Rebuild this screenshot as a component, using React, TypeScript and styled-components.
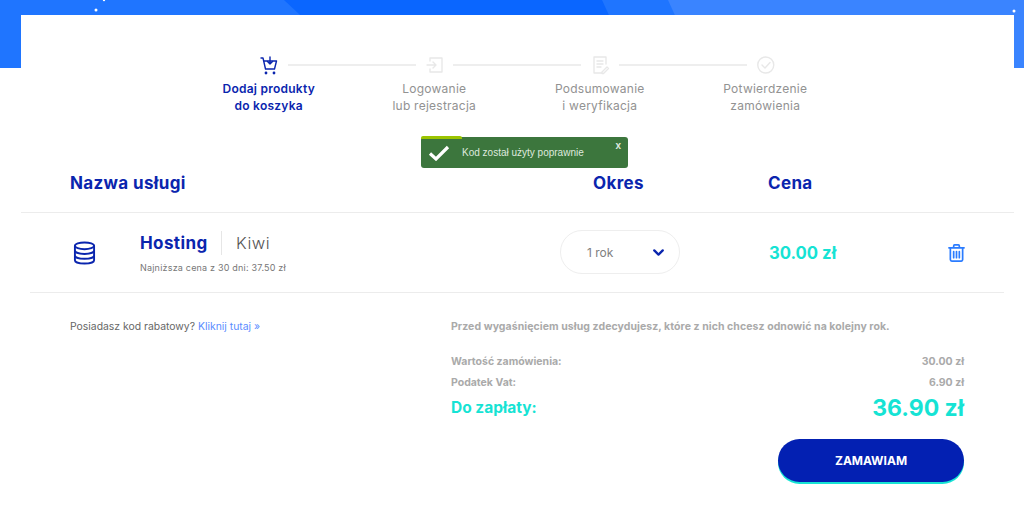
import React from "react";
import styled, { createGlobalStyle } from "styled-components";
import { ChevronDown } from "lucide-react";

const Global = createGlobalStyle`
  html, body { margin: 0; padding: 0; background: #fff; overflow: hidden; }
  body { font-family: Inter, "Open Sans", sans-serif; }
  * { box-sizing: border-box; }
`;

const navy = "#0a25ae";
const cyan = "#16e3d4";

const Page = styled.div`
  width: 1024px;
  height: 511px;
  overflow: hidden;
`;

const Hero = styled.header`
  position: relative;
  height: 68px;
  margin-bottom: -53px;
  background: #1f75ff;
  overflow: hidden;
`;

const HeroArt = styled.svg`
  position: absolute;
  inset: 0;
  width: 1024px;
  height: 68px;
`;

const Card = styled.main`
  position: relative;
  width: 993px;
  height: 496px;
  margin-left: 21px;
  background: #fff;
  padding-top: 40px;
`;

const Track = styled.div`
  display: flex;
  align-items: center;
  justify-content: center;
  height: 20px;
  margin-left: -1px;
`;

const StepIcon = styled.svg<{ $active?: boolean }>`
  width: 37.5px;
  height: 20px;
  flex: none;
  fill: none;
  stroke: ${(p) => (p.$active ? navy : "#e8e8e8")};
  stroke-width: 1.4;
  stroke-linecap: round;
  stroke-linejoin: round;
`;

const Connector = styled.span`
  width: 128px;
  height: 2px;
  background: #eeeeee;
  flex: none;
`;

const Labels = styled.div`
  display: grid;
  grid-template-columns: repeat(4, 165.5px);
  justify-content: center;
  margin: 5px 0 0 -1px;
`;

const Label = styled.div<{ $active?: boolean }>`
  text-align: center;
  font-size: 12px;
  line-height: 17px;
  letter-spacing: 0.25px;
  color: ${(p) => (p.$active ? navy : "#929292")};
  font-weight: ${(p) => (p.$active ? 600 : 400)};
`;

const Toast = styled.div`
  position: absolute;
  left: 400px;
  top: 122px;
  width: 207px;
  height: 31px;
  display: flex;
  align-items: center;
  padding-left: 7px;
  background: #3c763d;
  border-radius: 3px;
  color: #dfe9df;
  font: 400 10px "Liberation Sans", Arial, sans-serif;
`;

const ToastBar = styled.span`
  position: absolute;
  left: 0;
  top: -1.5px;
  width: 41px;
  height: 3.5px;
  background: #9bc400;
  border-radius: 2px 2px 0 0;
`;

const ToastCheck = styled.svg`
  width: 22px;
  height: 16px;
  margin-right: 12px;
  fill: none;
  stroke: #fff;
  stroke-width: 3.2;
`;

const ToastClose = styled.span`
  position: absolute;
  right: 7px;
  top: 3px;
  font-size: 10px;
  font-weight: 700;
`;

const Columns = styled.div`
  display: grid;
  grid-template-columns: 491px 175px 1fr;
  align-items: center;
  height: 58px;
  margin-top: 40px;
  padding-left: 49px;
  color: ${navy};
  font-size: 17px;
  font-weight: 700;
  letter-spacing: 0.35px;
`;

const ColHeadOkres = styled.div`
  padding-left: 32px;
`;

const ColHeadCena = styled.div`
  padding-left: 32px;
`;

const Rule = styled.hr<{ $inset?: boolean }>`
  height: 1px;
  margin: 0 ${(p) => (p.$inset ? "10px 0 9px" : "0")};
  border: 0;
  background: #ececec;
`;

const Row = styled.section`
  display: flex;
  align-items: center;
  height: 79px;
  padding-left: 52px;
`;

const DbIcon = styled.svg`
  width: 23px;
  height: 24px;
  flex: none;
  fill: none;
  stroke: ${navy};
  stroke-width: 2;
`;

const Product = styled.div`
  width: 420px;
  margin-left: 44px;
  margin-top: -2px;
`;

const ProductHead = styled.div`
  display: flex;
  align-items: center;
  height: 24px;
`;

const ProductName = styled.span`
  width: 82px;
  height: 24px;
  line-height: 24px;
  border-right: 1px solid #e6e6e6;
  color: ${navy};
  font-size: 17px;
  font-weight: 700;
  letter-spacing: 0.4px;
`;

const ProductPlan = styled.span`
  margin-left: 14px;
  color: #555;
  font-size: 16.5px;
  font-weight: 300;
  letter-spacing: 0.5px;
`;

const ProductNote = styled.div`
  margin-top: 7px;
  color: #777;
  font-size: 9px;
  letter-spacing: 0.2px;
`;

const PeriodSelect = styled.div`
  display: flex;
  align-items: center;
  justify-content: space-between;
  width: 120px;
  height: 44px;
  margin-top: -1px;
  padding: 0 12px 0 26px;
  border: 1px solid #eeeeee;
  border-radius: 22px;
  color: #808080;
  font-size: 12px;
`;

const Chevron = styled(ChevronDown)`
  width: 17px;
  height: 17px;
  color: ${navy};
  stroke-width: 3.2;
`;

const Price = styled.div`
  width: 68px;
  margin-left: 89px;
  color: ${cyan};
  font-size: 16.7px;
  font-weight: 700;
  white-space: nowrap;
`;

const TrashIcon = styled.svg`
  width: 17px;
  height: 18px;
  margin-left: 111px;
  fill: none;
  stroke: #2b7cff;
  stroke-width: 1.8;
  stroke-linecap: round;
  stroke-linejoin: round;
`;

const Lower = styled.section`
  display: flex;
  padding: 27px 50px 0 49px;
`;

const Promo = styled.div`
  width: 381px;
  font-size: 10.4px;
  line-height: 14px;
  color: #666;
`;

const PromoLink = styled.a`
  color: #5b8cff;
`;

const Summary = styled.div`
  flex: 1;
  color: #aaaaaa;
  font-size: 10.5px;
  font-weight: 700;
`;

const Notice = styled.p`
  margin: 0 0 17px;
  line-height: 14px;
  letter-spacing: 0.07px;
  white-space: nowrap;
`;

const SumRow = styled.div`
  display: flex;
  justify-content: space-between;
  align-items: center;
  height: 21px;
`;

const TotalRow = styled.div`
  display: flex;
  justify-content: space-between;
  align-items: center;
  height: 30px;
  margin-top: -1px;
  color: ${cyan};
  font-size: 15.5px;
`;

const TotalValue = styled.span`
  margin-top: 2px;
  font-size: 23px;
`;

const Actions = styled.div`
  display: flex;
  justify-content: flex-end;
  margin-top: 17px;
`;

const OrderButton = styled.button`
  width: 186px;
  height: 43px;
  border: 0;
  border-radius: 22px;
  background: #0320b2;
  box-shadow: 0 2px 0 ${cyan};
  color: #fff;
  font: 700 12px Inter, sans-serif;
`;

export default function App() {
  return (
    <Page>
      <Global />
      <Hero>
        <HeroArt viewBox="0 0 1024 68">
          <path d="M284 0 L357 68 L633 68 L602 0 Z" fill="#0a66ff" />
          <path d="M668 0 L699 68 L1024 68 L1024 0 Z" fill="#3a84ff" />
          <circle cx="96" cy="10" r="1.500" fill="#fff" />
          <circle cx="104" cy="0" r="1.200" fill="#fff" />
          <circle cx="1014" cy="11" r="1.500" fill="#fff" />
        </HeroArt>
      </Hero>
      <Card>
        <Track>
          <StepIcon $active viewBox="0 0 37.5 20">
            <path d="M11 3h2l2.500 11h9l2-8h-12" />
            <path d="M20 2v7M17.500 6.500 20 9l2.500-2.500" />
            <circle cx="16" cy="18" r=".7" />
            <circle cx="24" cy="18" r=".7" />
          </StepIcon>
          <Connector />
          <StepIcon viewBox="0 0 37.5 20">
            <path d="M14 6V3h12v14H14v-3M11 10h9M17 7l3 3-3 3" />
          </StepIcon>
          <Connector />
          <StepIcon viewBox="0 0 37.5 20">
            <path d="M25 9V2H13v16h7M16 6h6M16 9h6M16 12h4M21 17l5-5 1.500 1.500-5 5h-1.500z" />
          </StepIcon>
          <Connector />
          <StepIcon viewBox="0 0 37.5 20">
            <circle cx="18.750" cy="10" r="8" />
            <path d="M15 10l3 3 5-5.500" />
          </StepIcon>
        </Track>
        <Labels>
          <Label $active>Dodaj produkty<br />do koszyka</Label>
          <Label>Logowanie<br />lub rejestracja</Label>
          <Label>Podsumowanie<br />i weryfikacja</Label>
          <Label>Potwierdzenie<br />zamówienia</Label>
        </Labels>
        <Toast>
          <ToastBar />
          <ToastCheck viewBox="0 0 22 16"><path d="M2 8.500l6 5.500L20 2" /></ToastCheck>
          Kod został użyty poprawnie
          <ToastClose>x</ToastClose>
        </Toast>
        <Columns>
          <div>Nazwa usługi</div>
          <ColHeadOkres>Okres</ColHeadOkres>
          <ColHeadCena>Cena</ColHeadCena>
        </Columns>
        <Rule />
        <Row>
          <DbIcon viewBox="0 0 24 25">
            <ellipse cx="12" cy="5" rx="10" ry="3.500" />
            <path d="M2 5v15c0 2 4.500 3.500 10 3.500s10-1.500 10-3.500V5" />
            <path d="M2 10c0 2 4.500 3.500 10 3.500S22 12 22 10" />
            <path d="M2 15c0 2 4.500 3.500 10 3.500S22 17 22 15" />
          </DbIcon>
          <Product>
            <ProductHead>
              <ProductName>Hosting</ProductName>
              <ProductPlan>Kiwi</ProductPlan>
            </ProductHead>
            <ProductNote>Najniższa cena z 30 dni: 37.50 zł</ProductNote>
          </Product>
          <PeriodSelect>1 rok<Chevron /></PeriodSelect>
          <Price>30.00 zł</Price>
          <TrashIcon viewBox="0 0 18 19">
            <path d="M1 4h16M6 4V2a1 1 0 0 1 1-1h4a1 1 0 0 1 1 1v2" />
            <path d="M2.500 4v12.500a1.500 1.500 0 0 0 1.500 1.500h10a1.500 1.500 0 0 0 1.500-1.500V4" />
            <path d="M6 8v6.500M9 8v6.500M12 8v6.500" />
          </TrashIcon>
        </Row>
        <Rule $inset />
        <Lower>
          <Promo>Posiadasz kod rabatowy? <PromoLink>Kliknij tutaj »</PromoLink></Promo>
          <Summary>
            <Notice>Przed wygaśnięciem usług zdecydujesz, które z nich chcesz odnowić na kolejny rok.</Notice>
            <SumRow><span>Wartość zamówienia:</span><span>30.00 zł</span></SumRow>
            <SumRow><span>Podatek Vat:</span><span>6.90 zł</span></SumRow>
            <TotalRow><span>Do zapłaty:</span><TotalValue>36.90 zł</TotalValue></TotalRow>
            <Actions><OrderButton>ZAMAWIAM</OrderButton></Actions>
          </Summary>
        </Lower>
      </Card>
    </Page>
  );
}
